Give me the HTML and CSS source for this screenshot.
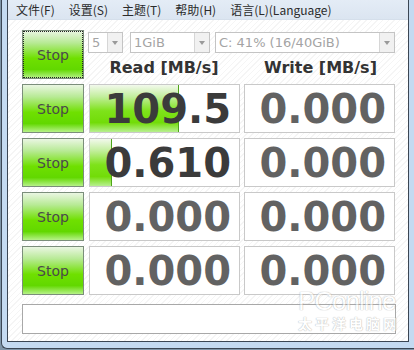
FILE: index.html
```html
<!DOCTYPE html>
<html lang="zh-CN">
<head>
  <meta charset="UTF-8"/>
  <title>CrystalDiskMark</title>
  <link rel="stylesheet" href="styles.css">
</head>
<body>
  <div class="frame">
    <div class="window">
      <nav class="menubar">
        <span class="menu-item">文件(F)</span>
        <span class="menu-item">设置(S)</span>
        <span class="menu-item">主题(T)</span>
        <span class="menu-item">帮助(H)</span>
        <span class="menu-item">语言(L)(Language)</span>
      </nav>

      <main class="client">
        <div class="bench">
          <button class="stop-btn all">Stop</button>
          <div class="top-right">
            <div class="combos">
              <div class="combo c-count"><span>5</span><i class="arrow"></i></div>
              <div class="combo c-size"><span>1GiB</span><i class="arrow"></i></div>
              <div class="combo c-drive"><span>C: 41% (16/40GiB)</span><i class="arrow"></i></div>
            </div>
            <div class="headers">
              <div class="col-title">Read [MB/s]</div>
              <div class="col-title">Write [MB/s]</div>
            </div>
          </div>

          <!-- result rows -->
          <button class="stop-btn">Stop</button>
          <div class="value read"><div class="bar" style="width: 60%"></div><span>109.5</span></div>
          <div class="value zero"><span>0.000</span></div>

          <button class="stop-btn">Stop</button>
          <div class="value read"><div class="bar" style="width: 15%"></div><span>0.610</span></div>
          <div class="value zero"><span>0.000</span></div>

          <button class="stop-btn">Stop</button>
          <div class="value zero"><span>0.000</span></div>
          <div class="value zero"><span>0.000</span></div>

          <button class="stop-btn">Stop</button>
          <div class="value zero"><span>0.000</span></div>
          <div class="value zero"><span>0.000</span></div>
        </div>

        <div class="status"></div>

        <div class="watermark">
          <div class="wm-logo">PConline</div>
          <div class="wm-cn">太平洋电脑网</div>
        </div>
      </main>
    </div>
  </div>
</body>
</html>
```

FILE: styles.css
```css
:root {
  --frame:      #c4daf1;
  --frame-line: #3b4654;
  --text:       #333;
  --muted:      #a4a4a4;
  --box-line:   #c9c9c9;
}

* {
  box-sizing: border-box;
  margin: 0;
  padding: 0;
}

body {
  width: 414px;
  height: 350px;
  overflow: hidden;
  background: #7f95a8;
  font-family: "DejaVu Sans", sans-serif;
  color: var(--text);
}

/* Window frame */
.frame {
  margin-left: 1px;
  width: 413px;
  height: 349px;
  padding: 0 5px 6px 5px;
  background: var(--frame);
  border-left: 1px solid var(--frame-line);
  border-bottom: 1px solid var(--frame-line);
  border-bottom-left-radius: 6px;
}

.window {
  width: 402px;
  height: 342px;
  border: 1px solid var(--frame-line);
  border-top: none;
  background: repeating-linear-gradient(135deg, #fff 0 3px, #f5f5f5 3px 4px);
  display: flex;
  flex-direction: column;
}

/* Menu bar */
.menubar {
  height: 20px;
  display: flex;
  align-items: center;
  gap: 14px;
  padding-left: 8px;
  background: linear-gradient(#e4ecf6, #dbe5f1);
  border-bottom: 1px solid #d5dfeb;
  font-family: "Noto Sans CJK SC", sans-serif;
  font-size: 12px;
  color: #2b2b2b;
}

/* Client area */
.client {
  position: relative;
  flex: 1;
  padding: 10px 0 0 14px;
}

.bench {
  display: grid;
  grid-template-columns: 62px 152px 151px;
  grid-auto-rows: 49px;
  column-gap: 4px;
  row-gap: 5px;
}
.bench > .value:nth-child(3n+1) { margin-left: 1px; }

/* Stop buttons */
.stop-btn {
  border: 1px solid #7b8e7b;
  background: linear-gradient(#eaf6e2 0%, #b8ea96 25%, #6fe000 58%, #62d800 82%, #b6f288 100%);
  font-family: "DejaVu Sans", sans-serif;
  font-size: 14px;
  color: #4a4a4a;
  cursor: pointer;
}
.stop-btn.all {
  outline: 1px dotted #222;
  outline-offset: -2px;
}

/* Top block: combos + column titles */
.top-right {
  grid-column: 2 / 4;
  display: flex;
  flex-direction: column;
  padding-top: 2px;
}

.combos {
  display: flex;
  height: 21px;
}
.combo {
  display: flex;
  align-items: center;
  justify-content: space-between;
  border: 1px solid #c4c4c4;
  background: #fff;
  padding-left: 3px;
  font-size: 13px;
  color: var(--muted);
}
.c-count { width: 35px; }
.c-size  { width: 80px; margin-left: 7px; }
.c-drive { width: 180px; margin-left: 5px; }

.arrow {
  width: 15px;
  height: 19px;
  border-left: 1px solid #d6d6d6;
  background: #f1f1f1;
  position: relative;
}
.arrow::after {
  content: '';
  position: absolute;
  left: 4px;
  top: 8px;
  border-left: 3.5px solid transparent;
  border-right: 3.5px solid transparent;
  border-top: 4px solid #9a9a9a;
}

.headers {
  display: grid;
  grid-template-columns: 152px 151px;
  column-gap: 5px;
  margin-top: 4px;
}
.col-title {
  text-align: center;
  font-weight: bold;
  font-size: 16px;
  line-height: 22px;
  color: #333;
}

/* Result boxes */
.value {
  position: relative;
  border: 1px solid var(--box-line);
  background: #fff;
  display: flex;
  align-items: center;
  justify-content: flex-end;
  padding-right: 8px;
  overflow: hidden;
}
.value span {
  position: relative;
  font-weight: bold;
  font-size: 40px;
  line-height: 1;
}
.value.read span { color: #3b3b3b; }
.value.zero span { color: #626262; }

.bar {
  position: absolute;
  left: 0;
  top: 0;
  bottom: 0;
  background: linear-gradient(#f2f9ec 0%, #c2ee9c 25%, #7ee21a 55%, #72dc08 80%, #b8f090 100%);
  border-right: 1px solid #4fa41a;
}

/* Status line */
.status {
  margin-top: 9px;
  width: 374px;
  height: 30px;
  border: 1px solid #a8a8a8;
  background: #fff;
}

/* Photo watermark */
.watermark {
  position: absolute;
  left: 290px;
  top: 266px;
  opacity: 0.55;
  color: #fff;
  text-shadow: 0 0 1px #8a8a8a, 0 0 1px #8a8a8a;
  pointer-events: none;
}
.wm-logo {
  font-family: "Liberation Sans", sans-serif;
  font-size: 26px;
  letter-spacing: -1px;
}
.wm-cn {
  font-family: "Noto Sans CJK SC", sans-serif;
  font-size: 14px;
  font-weight: bold;
  letter-spacing: 3px;
  margin-top: -4px;
}
```
